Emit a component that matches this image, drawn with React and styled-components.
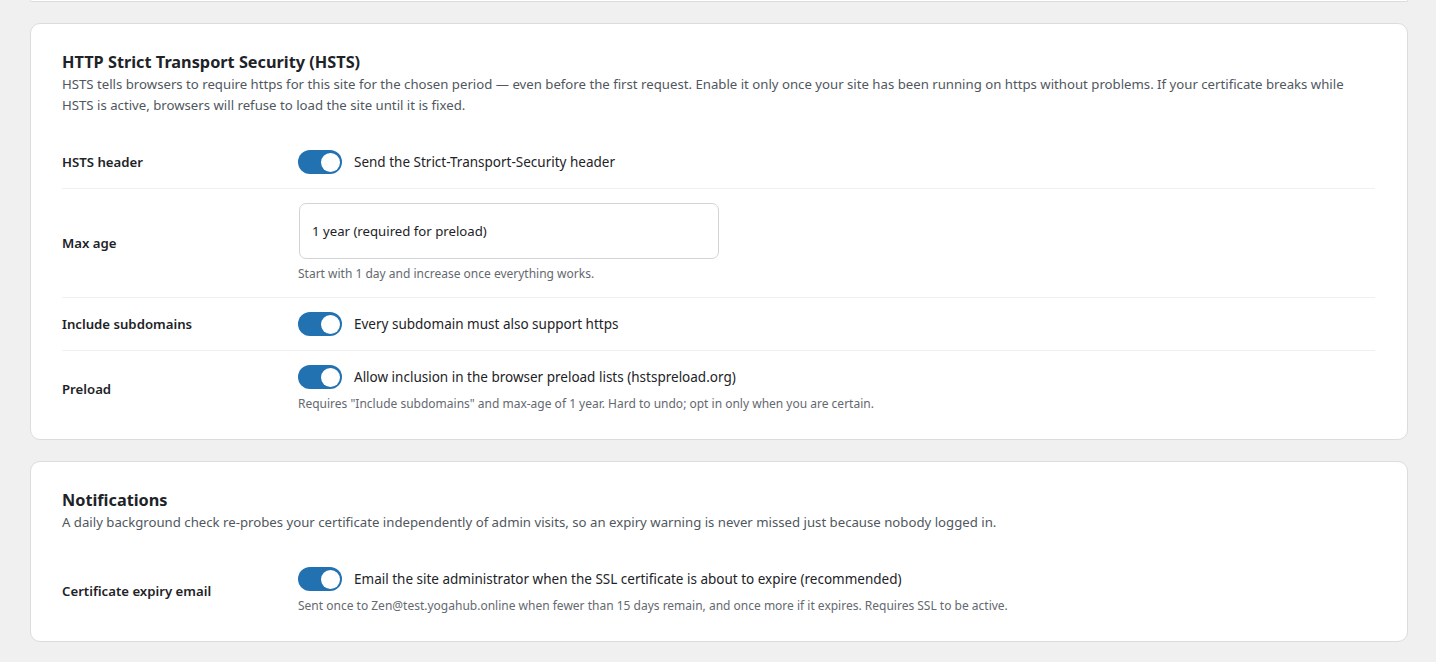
import React from "react";
import styled, { createGlobalStyle } from "styled-components";

const GlobalStyle = createGlobalStyle`
  body {
    margin: 0;
    background: #f0f0f1;
    font-family: "Noto Sans", "Open Sans", sans-serif;
    color: #1d2327;
  }
`;

const Page = styled.div`
  padding: 0 28px 20px 30px;
  display: flex;
  flex-direction: column;
  gap: 21px;
`;

// bottom of the previous card, scrolled mostly out of view
const CardTail = styled.div`
  height: 1px;
  background: #fff;
  border: 1px solid #dcdcde;
  border-top: 0;
  border-radius: 0 0 8px 8px;
`;

const Card = styled.section`
  background: #fff;
  border: 1px solid #dcdcde;
  border-radius: 10px;
  padding: 28px 32px 12px 31px;
`;

const Title = styled.h2`
  margin: 0;
  font-size: 16.3px;
  font-weight: 700;
  line-height: 20px;
  color: #1d2327;
`;

const Desc = styled.p`
  margin: 2px 0 20px;
  font-size: 13.2px;
  line-height: 21px;
  color: #50575e;
`;

const Row = styled.div`
  display: flex;
  align-items: center;
  padding: 14px 0;
  border-bottom: ${(p) => (p.$last ? "0" : "1px solid #f0f0f1")};
`;

const Label = styled.div`
  width: 236px;
  flex-shrink: 0;
  font-size: 13.2px;
  font-weight: 600;
  color: #1d2327;
`;

const Control = styled.div`
  display: flex;
  flex-direction: column;
  gap: 6px;
`;

const ToggleLine = styled.label`
  display: flex;
  align-items: center;
  gap: 12px;
  font-size: 13.5px;
  line-height: 24px;
  color: #1d2327;
  cursor: pointer;
`;

const Track = styled.span`
  position: relative;
  width: 44px;
  height: 24px;
  border-radius: 12px;
  background: ${(p) => (p.$on ? "#2271b1" : "#8c8f94")};
  flex-shrink: 0;
`;

const Knob = styled.span`
  position: absolute;
  top: 2.5px;
  left: ${(p) => (p.$on ? 22.5 : 2.5)}px;
  width: 19px;
  height: 19px;
  border-radius: 50%;
  background: #fff;
`;

const Help = styled.div`
  font-size: 12px;
  line-height: 18px;
  color: #646970;
`;

const TextBox = styled.input`
  box-sizing: border-box;
  width: 420px;
  height: 56px;
  margin-left: 1px;
  padding: 0 12px;
  border: 1px solid #d3d4d7;
  border-radius: 7px;
  font-family: inherit;
  font-size: 13.2px;
  color: #1d2327;
  background: #fff;
  outline: none;
`;

function Toggle({ on = true, children }) {
  return (
    <ToggleLine>
      <Track $on={on}>
        <Knob $on={on} />
      </Track>
      {children}
    </ToggleLine>
  );
}

export default function App() {
  return (
    <>
      <GlobalStyle />
      <Page>
        <CardTail />

        <Card>
          <Title>HTTP Strict Transport Security (HSTS)</Title>
          <Desc>
            HSTS tells browsers to require https for this site for the chosen period — even before the first
            request. Enable it only once your site has been running on https without problems. If your
            certificate breaks while HSTS is active, browsers will refuse to load the site until it is fixed.
          </Desc>

          <Row>
            <Label>HSTS header</Label>
            <Control>
              <Toggle>Send the Strict-Transport-Security header</Toggle>
            </Control>
          </Row>

          <Row>
            <Label>Max age</Label>
            <Control>
              <TextBox readOnly defaultValue="1 year (required for preload)" />
              <Help>Start with 1 day and increase once everything works.</Help>
            </Control>
          </Row>

          <Row>
            <Label>Include subdomains</Label>
            <Control>
              <Toggle>Every subdomain must also support https</Toggle>
            </Control>
          </Row>

          <Row $last>
            <Label>Preload</Label>
            <Control>
              <Toggle>Allow inclusion in the browser preload lists (hstspreload.org)</Toggle>
              <Help>
                Requires "Include subdomains" and max-age of 1 year. Hard to undo; opt in only when you are certain.
              </Help>
            </Control>
          </Row>
        </Card>

        <Card>
          <Title>Notifications</Title>
          <Desc>
            A daily background check re-probes your certificate independently of admin visits, so an expiry
            warning is never missed just because nobody logged in.
          </Desc>

          <Row $last>
            <Label>Certificate expiry email</Label>
            <Control>
              <Toggle>
                Email the site administrator when the SSL certificate is about to expire (recommended)
              </Toggle>
              <Help>
                Sent once to Zen@test.yogahub.online when fewer than 15 days remain, and once more if it
                expires. Requires SSL to be active.
              </Help>
            </Control>
          </Row>
        </Card>
      </Page>
    </>
  );
}
